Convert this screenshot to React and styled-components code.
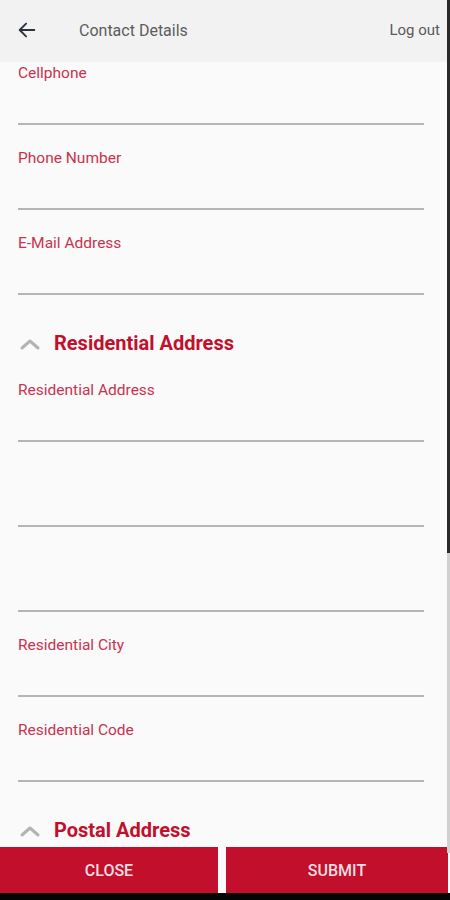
import React from "react"
import styled, { createGlobalStyle } from "styled-components"

const GlobalStyle = createGlobalStyle`
  html, body {
    margin: 0;
    padding: 0;
    background: #fafafa;
  }
  body {
    font-family: Roboto, "Liberation Sans", sans-serif;
  }
`

const red = "#c20f2c"

const fields = [
  { label: "Cellphone" },
  { label: "Phone Number" },
  { label: "E-Mail Address" },
  { section: "Residential Address" },
  { label: "Residential Address" },
  { label: "" },
  { label: "" },
  { label: "Residential City" },
  { label: "Residential Code" },
  { section: "Postal Address" },
]

const BackIcon = () => (
  <svg width="22" height="22" viewBox="0 0 24 24" fill="none">
    <path
      d="M20 12H4.5M11 5l-7 7 7 7"
      stroke="#2b3340"
      strokeWidth="2"
      strokeLinecap="round"
      strokeLinejoin="round"
    />
  </svg>
)

const ChevronUp = () => (
  <svg width="22" height="14" viewBox="0 0 22 14" fill="none">
    <path
      d="M3 11l8-7 8 7"
      stroke="#b4b4b4"
      strokeWidth="3"
      strokeLinecap="round"
      strokeLinejoin="round"
    />
  </svg>
)

const App = () => {
  return (
    <Page>
      <GlobalStyle />
      <Header>
        <BackButton>
          <BackIcon />
        </BackButton>
        <Title>Contact Details</Title>
        <LogOut>Log out</LogOut>
      </Header>
      <Scroll>
        <List>
          {fields.map((f, i) =>
            f.section ? (
              <Section key={i}>
                <ChevronUp />
                <SectionTitle>{f.section}</SectionTitle>
              </Section>
            ) : (
              <Field key={i}>
                <Label>{f.label || "\u00a0"}</Label>
              </Field>
            )
          )}
        </List>
      </Scroll>
      <ScrollEdge />
      <Footer>
        <ActionButton $width="218px">CLOSE</ActionButton>
        <ActionButton $width="222px">SUBMIT</ActionButton>
      </Footer>
      <NavStrip />
    </Page>
  )
}

const Page = styled.div`
  position: relative;
  width: 450px;
  height: 900px;
  display: flex;
  flex-direction: column;
  background: #fafafa;
  overflow: hidden;
`

const Header = styled.div`
  height: 62px;
  flex-shrink: 0;
  display: flex;
  align-items: center;
  background: #f2f2f2;
  padding: 0 10px 4px 16px;
  box-sizing: border-box;
`

const BackButton = styled.div`
  width: 22px;
  height: 22px;
  display: flex;
  margin-top: 2px;
`

const Title = styled.div`
  margin-left: 41px;
  font-size: 16px;
  color: #5c5c5c;
  flex: 1;
  margin-top: 2px;
`

const LogOut = styled.div`
  font-size: 15px;
  color: #5a5a5a;
  margin-top: 1px;
`

const Scroll = styled.div`
  flex: 1;
  overflow: hidden;
`

const List = styled.div`
  margin-top: -22px;
  display: flex;
  flex-direction: column;
`

const Field = styled.div`
  height: 85px;
  box-sizing: border-box;
  padding: 23px 26px 0 18px;
  display: flex;
  flex-direction: column;
  justify-content: space-between;

  &::after {
    content: "";
    display: block;
    height: 2px;
    background: #b5b5b5;
  }
`

const Label = styled.div`
  font-size: 15.5px;
  line-height: 20px;
  color: #c8334f;
`

const Section = styled.div`
  height: 62px;
  box-sizing: border-box;
  padding: 34px 18px 0 19px;
  display: flex;
  align-items: center;
  align-self: flex-start;

  svg {
    margin-top: 2px;
  }
`

const SectionTitle = styled.div`
  margin-left: 13px;
  font-size: 20px;
  font-weight: 700;
  line-height: 26px;
  color: ${red};
`

const ScrollEdge = styled.div`
  position: absolute;
  top: 0;
  right: 0;
  width: 3px;
  height: 553px;
  background: #2a2a2a;

  &::after {
    content: "";
    position: absolute;
    top: 553px;
    left: 0;
    width: 3px;
    height: 300px;
    background: #d0d0d0;
  }
`

const Footer = styled.div`
  flex-shrink: 0;
  height: 46px;
  display: flex;
  justify-content: space-between;
  background: #fafafa;
  padding-right: 2px;
`

const ActionButton = styled.div`
  width: ${(p) => p.$width};
  display: flex;
  align-items: center;
  justify-content: center;
  background: ${red};
  color: #f6dde2;
  font-size: 16px;
  font-weight: 500;
`

const NavStrip = styled.div`
  height: 7px;
  flex-shrink: 0;
  background: #050505;
`

export default App
